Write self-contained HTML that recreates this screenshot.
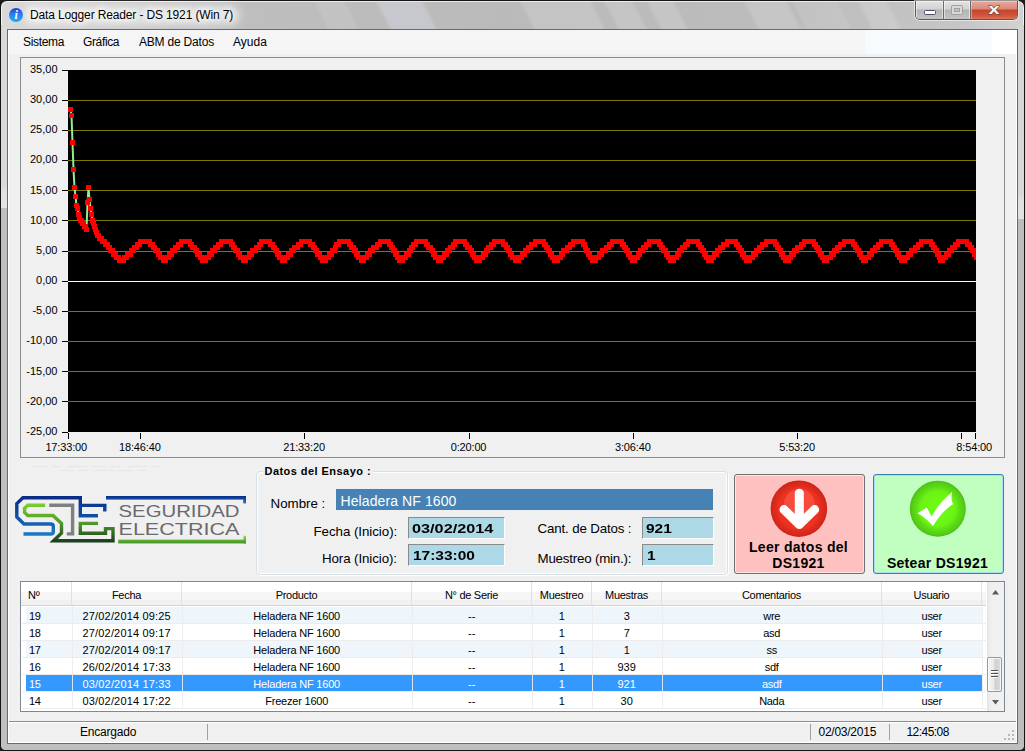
<!DOCTYPE html>
<html><head><meta charset="utf-8"><title>Data Logger Reader - DS 1921 (Win 7)</title>
<style>
html,body{margin:0;padding:0;}
body{width:1025px;height:751px;overflow:hidden;position:relative;background:#1c1c1c;font-family:"Liberation Sans",sans-serif;font-size:11px;color:#000;}
.abs{position:absolute;}
#frame{position:absolute;left:0;top:0;width:1023px;height:749px;border:1px solid #141414;border-radius:7px 7px 6px 6px;overflow:hidden;background:linear-gradient(90deg,#dadada 0px,#d0d0d0 60px,#bebebe 250px,#bababa 500px,#bcbcbc 800px,#c6c6c6 960px,#d2d2d2 1023px);box-shadow:inset 0 0 0 1px rgba(255,255,255,.7);}
#frame b{position:absolute;display:block}
#frame i{position:absolute;top:-5px;height:45px;transform:skewX(27deg);background:rgba(255,255,255,.15);filter:blur(1.5px);}
#client{position:absolute;left:8px;top:30px;width:1009px;height:713px;background:#f0f0f0;}
#cborder{position:absolute;left:7px;top:29px;width:1009px;height:713px;border:1px solid #6a6a6a;box-shadow:inset 1px 0 0 #fff,inset -1px 0 0 #fff,inset 0 -1px 0 #fff;}
#title{position:absolute;left:30px;top:7px;letter-spacing:-0.14px;font-size:12px;line-height:16px;white-space:nowrap;text-shadow:0 0 6px #fff,0 0 6px #fff,0 0 10px #fff,0 0 12px #fff;}
#menu{position:absolute;left:8px;top:30px;width:1009px;height:24px;background:linear-gradient(90deg,#f5f5f5 0,#f5f5f5 857px,#f6fbfd 857px,#f6fbfd 984px,#ffffff 984px);}
#menu span{position:absolute;top:5px;font-size:12px;line-height:14px;white-space:nowrap;}
.panel{position:absolute;border:1px solid #8c8c8c;box-sizing:border-box;}
.lbl{position:absolute;font-size:13.33px;line-height:16px;white-space:nowrap;}
.fld{position:absolute;box-sizing:border-box;background:#add8e6;border:1px solid;border-color:#8a8a8a #ffffff #ffffff #8a8a8a;font-weight:bold;font-size:13.33px;line-height:22.600px;padding-left:2.500px;white-space:nowrap;}
.btn{position:absolute;box-sizing:border-box;border:1px solid #707070;border-radius:3px;font-weight:bold;font-size:14px;letter-spacing:0.3px;line-height:15.500px;text-align:center;}
.hc{position:absolute;top:582px;height:24px;line-height:26.500px;text-align:center;box-sizing:border-box;font-size:11px;letter-spacing:-0.3px;}
.row{position:absolute;left:26px;width:956px;height:16px;line-height:16px;font-size:11px;letter-spacing:-0.3px;}
.row.alt{background:#eef5fb;}
.row.sel{background:#3399ff;color:#fff;}
.row span{position:absolute;top:0.500px;height:16px;text-align:center;box-sizing:border-box;white-space:nowrap;}
.hsep{position:absolute;top:582px;width:1px;height:23px;background:#e0e1e8;}
.csep{position:absolute;top:606px;width:1px;height:103px;background:rgba(236,236,236,.9);}
.rsep{position:absolute;left:22px;width:964px;height:1px;background:#ececec;}
#status span{position:absolute;top:3px;font-size:12px;line-height:14px;white-space:nowrap;}
</style></head><body>
<div id="frame"><b style="left:0;top:24px;width:7px;height:730px;background:linear-gradient(#d9d9d9 0,#dadada 160px,#e2e2e2 166px,#e4e4e4 183px,#bfbfbf 183px,#bfbfbf 100%)"></b><b style="left:1016px;top:24px;width:7px;height:730px;background:linear-gradient(#d4d4d4 0,#d8d8d8 170px,#e0e0e0 176px,#e2e2e2 194px,#bdbdbd 194px,#bdbdbd 100%)"></b><b style="left:0;top:743px;width:1023px;height:7px;background:#bfbfbf"></b><i style="left:322px;width:30px;opacity:.6"></i><i style="left:384px;width:46px;background:rgba(225,228,245,.3)"></i><i style="left:528px;width:70px"></i><i style="left:612px;width:28px"></i><i style="left:655px;width:26px"></i><i style="left:752px;width:42px"></i><i style="left:800px;width:45px;opacity:.6"></i><i style="left:866px;width:28px"></i></div>
<div class="abs" style="left:24px;top:5px;width:216px;height:20px;border-radius:10px;background:rgba(255,255,255,.5);filter:blur(5px)"></div>
<div id="title">Data Logger Reader - DS 1921 (Win 7)</div>
<svg class="abs" style="left:8px;top:7px" width="16" height="16" viewBox="0 0 16 16">
<defs><linearGradient id="ig" x1="0" y1="0" x2="0" y2="1"><stop offset="0" stop-color="#2a38c4"/><stop offset="0.3" stop-color="#2c6ae6"/><stop offset="0.6" stop-color="#2690f2"/><stop offset="1" stop-color="#1ea8f2"/></linearGradient></defs>
<circle cx="8" cy="8" r="7" fill="url(#ig)"/>
<text x="8.2" y="12.3" text-anchor="middle" font-family="Liberation Serif, serif" font-style="italic" font-weight="bold" font-size="12" fill="#fff">i</text>
</svg>
<div class="abs" style="left:915px;top:1px;width:103px;height:19px;box-sizing:border-box;border:1px solid #5a5a5a;border-top:none;border-radius:0 0 5px 5px;overflow:hidden;box-shadow:0 0 0 1px rgba(255,255,255,.55);">
 <div class="abs" style="left:0;top:0;width:27px;height:19px;background:linear-gradient(#e4e4e4 0,#d2d2d2 8px,#b4b4b4 9px,#c6c6c6 19px);border-right:1px solid #6a6a6a;box-shadow:inset 0 0 0 1px rgba(255,255,255,.5)"></div>
 <div class="abs" style="left:28px;top:0;width:26px;height:19px;background:linear-gradient(#e4e4e4 0,#d2d2d2 8px,#b4b4b4 9px,#c6c6c6 19px);border-right:1px solid #6a6a6a;box-shadow:inset 0 0 0 1px rgba(255,255,255,.5)"></div>
 <div class="abs" style="left:55px;top:0;width:47px;height:19px;background:linear-gradient(#e9a99c 0,#d9897a 8px,#c4442c 9px,#d2583c 15px,#dc7a5e 19px);box-shadow:inset 0 0 0 1px rgba(255,255,255,.35)"></div>
</div>
<svg class="abs" style="left:915px;top:0" width="103" height="20" viewBox="0 0 103 20">
 <rect x="9.5" y="10.5" width="11" height="4" rx="1" fill="#fff" stroke="#4a4e66" stroke-width="1"/>
 <rect x="36.500" y="5.500" width="11" height="9" rx="1" fill="#d8d8d8" stroke="#a0a0a0" stroke-width="1"/>
 <rect x="39.500" y="8.500" width="5" height="3" fill="#c0c0c0" stroke="#a0a0a0" stroke-width="1"/>
 <text x="79" y="13.800" text-anchor="middle" font-family="Liberation Sans, sans-serif" font-weight="bold" font-size="15" fill="#fff" stroke="#4a3c46" stroke-width="0.9" paint-order="stroke" textLength="11" lengthAdjust="spacingAndGlyphs">x</text>
</svg>
<div id="client"></div>
<div id="menu"><span style="left:15px;letter-spacing:-0.34px">Sistema</span><span style="left:75px;letter-spacing:-0.36px">Gráfica</span><span style="left:131px;letter-spacing:-0.2px">ABM de Datos</span><span style="left:225px">Ayuda</span></div>
<div class="panel" style="left:20px;top:57px;width:985px;height:401px;"></div>
<svg class="abs" style="left:0;top:0" width="1025" height="751" viewBox="0 0 1025 751" font-family="Liberation Sans, sans-serif" font-size="11" fill="#000">
<rect x="68" y="70" width="908" height="362" fill="#000"/>
<rect x="68" y="100" width="908" height="1" fill="#7e7800"/><rect x="68" y="130" width="908" height="1" fill="#7e7800"/><rect x="68" y="160" width="908" height="1" fill="#7e7800"/><rect x="68" y="190" width="908" height="1" fill="#7e7800"/><rect x="68" y="220" width="908" height="1" fill="#7e7800"/><rect x="68" y="251" width="908" height="1" fill="#7e7800"/><rect x="68" y="311" width="908" height="1" fill="#7e7800"/><rect x="68" y="341" width="908" height="1" fill="#7e7800"/><rect x="68" y="371" width="908" height="1" fill="#7e7800"/><rect x="68" y="401" width="908" height="1" fill="#7e7800"/><rect x="68" y="281" width="908" height="1" fill="#ffffff"/>
<clipPath id="pc"><rect x="68" y="70" width="908" height="362"/></clipPath>
<g clip-path="url(#pc)"><polyline points="70.5,109.5 71.5,115.5 72.5,142.5 73.5,169.5 74.5,187.5 75.5,196.5 76.5,205.5 77.5,208.5 78.5,214.5 79.5,217.5 80.5,220.5 81.5,220.5 82.5,223.5 83.5,223.5 84.5,226.5 85.5,226.5 86.5,229.5 87.5,202.5 88.5,187.5 89.5,199.5 90.5,208.5 91.5,214.5 92.5,220.5 93.5,223.5 94.5,226.5 95.5,229.5 96.5,232.5 97.5,235.5 98.5,235.5 99.5,238.5 100.5,238.5 101.5,238.5 102.5,241.5 103.5,241.5 104.5,241.5 105.5,244.5 106.5,244.5 107.5,244.5 108.5,247.5 108.5,247.5 109.5,247.5 110.5,250.5 111.5,250.5 112.5,250.5 113.5,254.5 114.5,254.5 115.5,254.5 116.5,257.5 117.5,257.5 118.5,257.5 119.5,260.5 120.5,260.5 121.5,260.5 122.5,260.5 123.5,260.5 124.5,257.5 125.5,257.5 126.5,257.5 127.5,254.5 128.5,254.5 129.5,254.5 130.5,254.5 131.5,250.5 132.5,250.5 133.5,250.5 134.5,247.5 135.5,247.5 136.5,247.5 137.5,244.5 138.5,244.5 139.5,244.5 140.5,241.5 141.5,241.5 142.5,241.5 143.5,241.5 144.5,241.5 145.5,241.5 146.5,241.5 147.5,241.5 148.5,241.5 149.5,241.5 150.5,244.5 151.5,244.5 152.5,244.5 153.5,247.5 154.5,247.5 155.5,250.5 156.5,250.5 157.5,250.5 158.5,254.5 159.5,254.5 160.5,257.5 161.5,257.5 162.5,257.5 163.5,260.5 164.5,260.5 165.5,260.5 166.5,257.5 167.5,257.5 168.5,257.5 169.5,254.5 170.5,254.5 171.5,254.5 172.5,250.5 173.5,250.5 174.5,250.5 175.5,247.5 176.5,247.5 177.5,247.5 178.5,244.5 179.5,244.5 180.5,244.5 181.5,241.5 182.5,241.5 183.5,241.5 184.5,241.5 184.5,241.5 185.5,241.5 186.5,241.5 187.5,241.5 188.5,241.5 189.5,241.5 190.5,244.5 191.5,244.5 192.5,247.5 193.5,247.5 194.5,247.5 195.5,250.5 196.5,250.5 197.5,254.5 198.5,254.5 199.5,254.5 200.5,257.5 201.5,257.5 202.5,260.5 203.5,260.5 204.5,260.5 205.5,260.5 206.5,257.5 207.5,257.5 208.5,257.5 209.5,254.5 210.5,254.5 211.5,254.5 212.5,250.5 213.5,250.5 214.5,250.5 215.5,247.5 216.5,247.5 217.5,247.5 218.5,244.5 219.5,244.5 220.5,244.5 221.5,241.5 222.5,241.5 223.5,241.5 224.5,241.5 225.5,241.5 226.5,241.5 227.5,241.5 228.5,241.5 229.5,241.5 230.5,241.5 231.5,244.5 232.5,244.5 233.5,247.5 234.5,247.5 235.5,250.5 236.5,250.5 237.5,250.5 238.5,254.5 239.5,254.5 240.5,257.5 241.5,257.5 242.5,257.5 243.5,260.5 244.5,260.5 245.5,260.5 246.5,257.5 247.5,257.5 248.5,257.5 249.5,254.5 250.5,254.5 251.5,254.5 252.5,250.5 253.5,250.5 254.5,250.5 255.5,250.5 256.5,247.5 257.5,247.5 258.5,247.5 259.5,244.5 259.5,244.5 260.5,244.5 261.5,241.5 262.5,241.5 263.5,241.5 264.5,241.5 265.5,241.5 266.5,241.5 267.5,241.5 268.5,241.5 269.5,241.5 270.5,244.5 271.5,244.5 272.5,244.5 273.5,247.5 274.5,247.5 275.5,250.5 276.5,250.5 277.5,254.5 278.5,254.5 279.5,257.5 280.5,257.5 281.5,257.5 282.5,260.5 283.5,260.5 284.5,260.5 285.5,257.5 286.5,257.5 287.5,257.5 288.5,254.5 289.5,254.5 290.5,254.5 291.5,250.5 292.5,250.5 293.5,250.5 294.5,247.5 295.5,247.5 296.5,247.5 297.5,247.5 298.5,244.5 299.5,244.5 300.5,244.5 301.5,241.5 302.5,241.5 303.5,241.5 304.5,241.5 305.5,241.5 306.5,241.5 307.5,241.5 308.5,241.5 309.5,241.5 310.5,244.5 311.5,244.5 312.5,244.5 313.5,247.5 314.5,247.5 315.5,250.5 316.5,250.5 317.5,254.5 318.5,254.5 319.5,254.5 320.5,257.5 321.5,257.5 322.5,260.5 323.5,260.5 324.5,260.5 325.5,260.5 326.5,257.5 327.5,257.5 328.5,257.5 329.5,254.5 330.5,254.5 331.5,254.5 332.5,250.5 333.5,250.5 334.5,250.5 335.5,247.5 335.5,247.5 336.5,244.5 337.5,244.5 338.5,244.5 339.5,241.5 340.5,241.5 341.5,241.5 342.5,241.5 343.5,241.5 344.5,241.5 345.5,241.5 346.5,241.5 347.5,241.5 348.5,241.5 349.5,244.5 350.5,244.5 351.5,247.5 352.5,247.5 353.5,247.5 354.5,250.5 355.5,250.5 356.5,254.5 357.5,254.5 358.5,257.5 359.5,257.5 360.5,257.5 361.5,260.5 362.5,260.5 363.5,260.5 364.5,257.5 365.5,257.5 366.5,257.5 367.5,254.5 368.5,254.5 369.5,254.5 370.5,250.5 371.5,250.5 372.5,250.5 373.5,247.5 374.5,247.5 375.5,247.5 376.5,247.5 377.5,244.5 378.5,244.5 379.5,244.5 380.5,241.5 381.5,241.5 382.5,241.5 383.5,241.5 384.5,241.5 385.5,241.5 386.5,241.5 387.5,241.5 388.5,241.5 389.5,244.5 390.5,244.5 391.5,247.5 392.5,247.5 393.5,250.5 394.5,250.5 395.5,254.5 396.5,254.5 397.5,257.5 398.5,257.5 399.5,260.5 400.5,260.5 401.5,260.5 402.5,260.5 403.5,257.5 404.5,257.5 405.5,257.5 406.5,254.5 407.5,254.5 408.5,254.5 409.5,250.5 410.5,250.5 410.5,250.5 411.5,247.5 412.5,247.5 413.5,244.5 414.5,244.5 415.5,244.5 416.5,241.5 417.5,241.5 418.5,241.5 419.5,241.5 420.5,241.5 421.5,241.5 422.5,241.5 423.5,241.5 424.5,241.5 425.5,241.5 426.5,244.5 427.5,244.5 428.5,247.5 429.5,247.5 430.5,247.5 431.5,250.5 432.5,250.5 433.5,254.5 434.5,254.5 435.5,257.5 436.5,257.5 437.5,257.5 438.5,260.5 439.5,260.5 440.5,260.5 441.5,257.5 442.5,257.5 443.5,257.5 444.5,254.5 445.5,254.5 446.5,254.5 447.5,250.5 448.5,250.5 449.5,250.5 450.5,247.5 451.5,247.5 452.5,247.5 453.5,244.5 454.5,244.5 455.5,241.5 456.5,241.5 457.5,241.5 458.5,241.5 459.5,241.5 460.5,241.5 461.5,241.5 462.5,241.5 463.5,241.5 464.5,241.5 465.5,244.5 466.5,244.5 467.5,247.5 468.5,247.5 469.5,247.5 470.5,250.5 471.5,250.5 472.5,254.5 473.5,254.5 474.5,257.5 475.5,257.5 476.5,260.5 477.5,260.5 478.5,260.5 479.5,260.5 480.5,257.5 481.5,257.5 482.5,257.5 483.5,254.5 484.5,254.5 485.5,254.5 486.5,250.5 486.5,250.5 487.5,250.5 488.5,247.5 489.5,247.5 490.5,247.5 491.5,244.5 492.5,244.5 493.5,244.5 494.5,241.5 495.5,241.5 496.5,241.5 497.5,241.5 498.5,241.5 499.5,241.5 500.5,241.5 501.5,241.5 502.5,241.5 503.5,244.5 504.5,244.5 505.5,244.5 506.5,247.5 507.5,247.5 508.5,250.5 509.5,250.5 510.5,254.5 511.5,254.5 512.5,257.5 513.5,257.5 514.5,257.5 515.5,260.5 516.5,260.5 517.5,260.5 518.5,260.5 519.5,257.5 520.5,257.5 521.5,257.5 522.5,254.5 523.5,254.5 524.5,254.5 525.5,250.5 526.5,250.5 527.5,250.5 528.5,247.5 529.5,247.5 530.5,247.5 531.5,244.5 532.5,244.5 533.5,244.5 534.5,244.5 535.5,241.5 536.5,241.5 537.5,241.5 538.5,241.5 539.5,241.5 540.5,241.5 541.5,241.5 542.5,241.5 543.5,241.5 544.5,244.5 545.5,244.5 546.5,247.5 547.5,247.5 548.5,250.5 549.5,250.5 550.5,254.5 551.5,254.5 552.5,257.5 553.5,257.5 554.5,260.5 555.5,260.5 556.5,260.5 557.5,260.5 558.5,257.5 559.5,257.5 560.5,257.5 561.5,254.5 562.5,254.5 562.5,254.5 563.5,250.5 564.5,250.5 565.5,250.5 566.5,250.5 567.5,247.5 568.5,247.5 569.5,247.5 570.5,244.5 571.5,244.5 572.5,244.5 573.5,241.5 574.5,241.5 575.5,241.5 576.5,241.5 577.5,241.5 578.5,241.5 579.5,241.5 580.5,241.5 581.5,241.5 582.5,241.5 583.5,244.5 584.5,244.5 585.5,247.5 586.5,250.5 587.5,250.5 588.5,254.5 589.5,254.5 590.5,257.5 591.5,257.5 592.5,260.5 593.5,260.5 594.5,260.5 595.5,260.5 596.5,257.5 597.5,257.5 598.5,257.5 599.5,254.5 600.5,254.5 601.5,254.5 602.5,250.5 603.5,250.5 604.5,250.5 605.5,250.5 606.5,247.5 607.5,247.5 608.5,247.5 609.5,244.5 610.5,244.5 611.5,244.5 612.5,241.5 613.5,241.5 614.5,241.5 615.5,241.5 616.5,241.5 617.5,241.5 618.5,241.5 619.5,241.5 620.5,241.5 621.5,241.5 622.5,244.5 623.5,244.5 624.5,247.5 625.5,247.5 626.5,250.5 627.5,250.5 628.5,254.5 629.5,254.5 630.5,257.5 631.5,257.5 632.5,260.5 633.5,260.5 634.5,260.5 635.5,257.5 636.5,257.5 637.5,257.5 638.5,254.5 638.5,254.5 639.5,254.5 640.5,250.5 641.5,250.5 642.5,250.5 643.5,247.5 644.5,247.5 645.5,247.5 646.5,244.5 647.5,244.5 648.5,244.5 649.5,241.5 650.5,241.5 651.5,241.5 652.5,241.5 653.5,241.5 654.5,241.5 655.5,241.5 656.5,241.5 657.5,241.5 658.5,241.5 659.5,244.5 660.5,244.5 661.5,247.5 662.5,247.5 663.5,250.5 664.5,250.5 665.5,250.5 666.5,254.5 667.5,254.5 668.5,257.5 669.5,257.5 670.5,260.5 671.5,260.5 672.5,260.5 673.5,260.5 674.5,257.5 675.5,257.5 676.5,257.5 677.5,254.5 678.5,254.5 679.5,250.5 680.5,250.5 681.5,250.5 682.5,247.5 683.5,247.5 684.5,247.5 685.5,244.5 686.5,244.5 687.5,244.5 688.5,241.5 689.5,241.5 690.5,241.5 691.5,241.5 692.5,241.5 693.5,241.5 694.5,241.5 695.5,241.5 696.5,241.5 697.5,241.5 698.5,244.5 699.5,244.5 700.5,247.5 701.5,247.5 702.5,250.5 703.5,250.5 704.5,254.5 705.5,254.5 706.5,257.5 707.5,257.5 708.5,260.5 709.5,260.5 710.5,260.5 711.5,260.5 712.5,257.5 713.5,257.5 713.5,257.5 714.5,254.5 715.5,254.5 716.5,254.5 717.5,250.5 718.5,250.5 719.5,250.5 720.5,247.5 721.5,247.5 722.5,247.5 723.5,244.5 724.5,244.5 725.5,244.5 726.5,244.5 727.5,241.5 728.5,241.5 729.5,241.5 730.5,241.5 731.5,241.5 732.5,241.5 733.5,241.5 734.5,241.5 735.5,241.5 736.5,244.5 737.5,244.5 738.5,247.5 739.5,247.5 740.5,250.5 741.5,250.5 742.5,254.5 743.5,254.5 744.5,257.5 745.5,257.5 746.5,260.5 747.5,260.5 748.5,260.5 749.5,260.5 750.5,257.5 751.5,257.5 752.5,257.5 753.5,254.5 754.5,254.5 755.5,254.5 756.5,250.5 757.5,250.5 758.5,250.5 759.5,247.5 760.5,247.5 761.5,247.5 762.5,244.5 763.5,244.5 764.5,244.5 765.5,244.5 766.5,241.5 767.5,241.5 768.5,241.5 769.5,241.5 770.5,241.5 771.5,241.5 772.5,241.5 773.5,241.5 774.5,241.5 775.5,244.5 776.5,244.5 777.5,247.5 778.5,247.5 779.5,250.5 780.5,250.5 781.5,254.5 782.5,254.5 783.5,257.5 784.5,257.5 785.5,260.5 786.5,260.5 787.5,260.5 788.5,260.5 789.5,257.5 789.5,257.5 790.5,257.5 791.5,254.5 792.5,254.5 793.5,254.5 794.5,250.5 795.5,250.5 796.5,250.5 797.5,247.5 798.5,247.5 799.5,247.5 800.5,247.5 801.5,244.5 802.5,244.5 803.5,244.5 804.5,241.5 805.5,241.5 806.5,241.5 807.5,241.5 808.5,241.5 809.5,241.5 810.5,241.5 811.5,241.5 812.5,241.5 813.5,241.5 814.5,244.5 815.5,244.5 816.5,247.5 817.5,247.5 818.5,250.5 819.5,250.5 820.5,254.5 821.5,254.5 822.5,257.5 823.5,257.5 824.5,260.5 825.5,260.5 826.5,260.5 827.5,257.5 828.5,257.5 829.5,257.5 830.5,257.5 831.5,254.5 832.5,254.5 833.5,254.5 834.5,250.5 835.5,250.5 836.5,250.5 837.5,247.5 838.5,247.5 839.5,247.5 840.5,244.5 841.5,244.5 842.5,244.5 843.5,244.5 844.5,241.5 845.5,241.5 846.5,241.5 847.5,241.5 848.5,241.5 849.5,241.5 850.5,241.5 851.5,241.5 852.5,241.5 853.5,244.5 854.5,244.5 855.5,247.5 856.5,247.5 857.5,250.5 858.5,250.5 859.5,254.5 860.5,254.5 861.5,257.5 862.5,257.5 863.5,260.5 864.5,260.5 864.5,260.5 865.5,260.5 866.5,257.5 867.5,257.5 868.5,257.5 869.5,254.5 870.5,254.5 871.5,254.5 872.5,250.5 873.5,250.5 874.5,250.5 875.5,247.5 876.5,247.5 877.5,247.5 878.5,244.5 879.5,244.5 880.5,244.5 881.5,241.5 882.5,241.5 883.5,241.5 884.5,241.5 885.5,241.5 886.5,241.5 887.5,241.5 888.5,241.5 889.5,241.5 890.5,241.5 891.5,244.5 892.5,244.5 893.5,247.5 894.5,247.5 895.5,250.5 896.5,250.5 897.5,254.5 898.5,254.5 899.5,257.5 900.5,257.5 901.5,260.5 902.5,260.5 903.5,260.5 904.5,260.5 905.5,257.5 906.5,257.5 907.5,257.5 908.5,254.5 909.5,254.5 910.5,254.5 911.5,250.5 912.5,250.5 913.5,250.5 914.5,250.5 915.5,247.5 916.5,247.5 917.5,247.5 918.5,244.5 919.5,244.5 920.5,244.5 921.5,241.5 922.5,241.5 923.5,241.5 924.5,241.5 925.5,241.5 926.5,241.5 927.5,241.5 928.5,241.5 929.5,241.5 930.5,241.5 931.5,244.5 932.5,244.5 933.5,247.5 934.5,247.5 935.5,250.5 936.5,250.5 937.5,254.5 938.5,254.5 939.5,257.5 940.5,257.5 940.5,260.5 941.5,260.5 942.5,260.5 943.5,257.5 944.5,257.5 945.5,257.5 946.5,254.5 947.5,254.5 948.5,254.5 949.5,250.5 950.5,250.5 951.5,250.5 952.5,247.5 953.5,247.5 954.5,247.5 955.5,244.5 956.5,244.5 957.5,244.5 958.5,241.5 959.5,241.5 960.5,241.5 961.5,241.5 962.5,241.5 963.5,241.5 964.5,241.5 965.5,241.5 966.5,241.5 967.5,244.5 968.5,244.5 969.5,244.5 970.5,247.5 971.5,247.5 972.5,250.5 973.5,250.5 974.5,254.5 975.5,254.5 976.5,257.5 977.5,257.5 978.5,260.5" fill="none" stroke="#90ee90" stroke-width="2"/>
<path d="M68 107h5v5h-5zM69 113h5v5h-5zM70 140h5v5h-5zM71 167h5v5h-5zM72 185h5v5h-5zM73 194h5v5h-5zM74 203h5v5h-5zM75 206h5v5h-5zM76 212h5v5h-5zM77 215h5v5h-5zM78 218h5v5h-5zM79 218h5v5h-5zM80 221h5v5h-5zM81 221h5v5h-5zM82 224h5v5h-5zM83 224h5v5h-5zM84 227h5v5h-5zM85 200h5v5h-5zM86 185h5v5h-5zM87 197h5v5h-5zM88 206h5v5h-5zM89 212h5v5h-5zM90 218h5v5h-5zM91 221h5v5h-5zM92 224h5v5h-5zM93 227h5v5h-5zM94 230h5v5h-5zM95 233h5v5h-5zM96 233h5v5h-5zM97 236h5v5h-5zM98 236h5v5h-5zM99 236h5v5h-5zM100 239h5v5h-5zM101 239h5v5h-5zM102 239h5v5h-5zM103 242h5v5h-5zM104 242h5v5h-5zM105 242h5v5h-5zM106 245h5v5h-5zM106 245h5v5h-5zM107 245h5v5h-5zM108 248h5v5h-5zM109 248h5v5h-5zM110 248h5v5h-5zM111 252h5v5h-5zM112 252h5v5h-5zM113 252h5v5h-5zM114 255h5v5h-5zM115 255h5v5h-5zM116 255h5v5h-5zM117 258h5v5h-5zM118 258h5v5h-5zM119 258h5v5h-5zM120 258h5v5h-5zM121 258h5v5h-5zM122 255h5v5h-5zM123 255h5v5h-5zM124 255h5v5h-5zM125 252h5v5h-5zM126 252h5v5h-5zM127 252h5v5h-5zM128 252h5v5h-5zM129 248h5v5h-5zM130 248h5v5h-5zM131 248h5v5h-5zM132 245h5v5h-5zM133 245h5v5h-5zM134 245h5v5h-5zM135 242h5v5h-5zM136 242h5v5h-5zM137 242h5v5h-5zM138 239h5v5h-5zM139 239h5v5h-5zM140 239h5v5h-5zM141 239h5v5h-5zM142 239h5v5h-5zM143 239h5v5h-5zM144 239h5v5h-5zM145 239h5v5h-5zM146 239h5v5h-5zM147 239h5v5h-5zM148 242h5v5h-5zM149 242h5v5h-5zM150 242h5v5h-5zM151 245h5v5h-5zM152 245h5v5h-5zM153 248h5v5h-5zM154 248h5v5h-5zM155 248h5v5h-5zM156 252h5v5h-5zM157 252h5v5h-5zM158 255h5v5h-5zM159 255h5v5h-5zM160 255h5v5h-5zM161 258h5v5h-5zM162 258h5v5h-5zM163 258h5v5h-5zM164 255h5v5h-5zM165 255h5v5h-5zM166 255h5v5h-5zM167 252h5v5h-5zM168 252h5v5h-5zM169 252h5v5h-5zM170 248h5v5h-5zM171 248h5v5h-5zM172 248h5v5h-5zM173 245h5v5h-5zM174 245h5v5h-5zM175 245h5v5h-5zM176 242h5v5h-5zM177 242h5v5h-5zM178 242h5v5h-5zM179 239h5v5h-5zM180 239h5v5h-5zM181 239h5v5h-5zM182 239h5v5h-5zM182 239h5v5h-5zM183 239h5v5h-5zM184 239h5v5h-5zM185 239h5v5h-5zM186 239h5v5h-5zM187 239h5v5h-5zM188 242h5v5h-5zM189 242h5v5h-5zM190 245h5v5h-5zM191 245h5v5h-5zM192 245h5v5h-5zM193 248h5v5h-5zM194 248h5v5h-5zM195 252h5v5h-5zM196 252h5v5h-5zM197 252h5v5h-5zM198 255h5v5h-5zM199 255h5v5h-5zM200 258h5v5h-5zM201 258h5v5h-5zM202 258h5v5h-5zM203 258h5v5h-5zM204 255h5v5h-5zM205 255h5v5h-5zM206 255h5v5h-5zM207 252h5v5h-5zM208 252h5v5h-5zM209 252h5v5h-5zM210 248h5v5h-5zM211 248h5v5h-5zM212 248h5v5h-5zM213 245h5v5h-5zM214 245h5v5h-5zM215 245h5v5h-5zM216 242h5v5h-5zM217 242h5v5h-5zM218 242h5v5h-5zM219 239h5v5h-5zM220 239h5v5h-5zM221 239h5v5h-5zM222 239h5v5h-5zM223 239h5v5h-5zM224 239h5v5h-5zM225 239h5v5h-5zM226 239h5v5h-5zM227 239h5v5h-5zM228 239h5v5h-5zM229 242h5v5h-5zM230 242h5v5h-5zM231 245h5v5h-5zM232 245h5v5h-5zM233 248h5v5h-5zM234 248h5v5h-5zM235 248h5v5h-5zM236 252h5v5h-5zM237 252h5v5h-5zM238 255h5v5h-5zM239 255h5v5h-5zM240 255h5v5h-5zM241 258h5v5h-5zM242 258h5v5h-5zM243 258h5v5h-5zM244 255h5v5h-5zM245 255h5v5h-5zM246 255h5v5h-5zM247 252h5v5h-5zM248 252h5v5h-5zM249 252h5v5h-5zM250 248h5v5h-5zM251 248h5v5h-5zM252 248h5v5h-5zM253 248h5v5h-5zM254 245h5v5h-5zM255 245h5v5h-5zM256 245h5v5h-5zM257 242h5v5h-5zM257 242h5v5h-5zM258 242h5v5h-5zM259 239h5v5h-5zM260 239h5v5h-5zM261 239h5v5h-5zM262 239h5v5h-5zM263 239h5v5h-5zM264 239h5v5h-5zM265 239h5v5h-5zM266 239h5v5h-5zM267 239h5v5h-5zM268 242h5v5h-5zM269 242h5v5h-5zM270 242h5v5h-5zM271 245h5v5h-5zM272 245h5v5h-5zM273 248h5v5h-5zM274 248h5v5h-5zM275 252h5v5h-5zM276 252h5v5h-5zM277 255h5v5h-5zM278 255h5v5h-5zM279 255h5v5h-5zM280 258h5v5h-5zM281 258h5v5h-5zM282 258h5v5h-5zM283 255h5v5h-5zM284 255h5v5h-5zM285 255h5v5h-5zM286 252h5v5h-5zM287 252h5v5h-5zM288 252h5v5h-5zM289 248h5v5h-5zM290 248h5v5h-5zM291 248h5v5h-5zM292 245h5v5h-5zM293 245h5v5h-5zM294 245h5v5h-5zM295 245h5v5h-5zM296 242h5v5h-5zM297 242h5v5h-5zM298 242h5v5h-5zM299 239h5v5h-5zM300 239h5v5h-5zM301 239h5v5h-5zM302 239h5v5h-5zM303 239h5v5h-5zM304 239h5v5h-5zM305 239h5v5h-5zM306 239h5v5h-5zM307 239h5v5h-5zM308 242h5v5h-5zM309 242h5v5h-5zM310 242h5v5h-5zM311 245h5v5h-5zM312 245h5v5h-5zM313 248h5v5h-5zM314 248h5v5h-5zM315 252h5v5h-5zM316 252h5v5h-5zM317 252h5v5h-5zM318 255h5v5h-5zM319 255h5v5h-5zM320 258h5v5h-5zM321 258h5v5h-5zM322 258h5v5h-5zM323 258h5v5h-5zM324 255h5v5h-5zM325 255h5v5h-5zM326 255h5v5h-5zM327 252h5v5h-5zM328 252h5v5h-5zM329 252h5v5h-5zM330 248h5v5h-5zM331 248h5v5h-5zM332 248h5v5h-5zM333 245h5v5h-5zM333 245h5v5h-5zM334 242h5v5h-5zM335 242h5v5h-5zM336 242h5v5h-5zM337 239h5v5h-5zM338 239h5v5h-5zM339 239h5v5h-5zM340 239h5v5h-5zM341 239h5v5h-5zM342 239h5v5h-5zM343 239h5v5h-5zM344 239h5v5h-5zM345 239h5v5h-5zM346 239h5v5h-5zM347 242h5v5h-5zM348 242h5v5h-5zM349 245h5v5h-5zM350 245h5v5h-5zM351 245h5v5h-5zM352 248h5v5h-5zM353 248h5v5h-5zM354 252h5v5h-5zM355 252h5v5h-5zM356 255h5v5h-5zM357 255h5v5h-5zM358 255h5v5h-5zM359 258h5v5h-5zM360 258h5v5h-5zM361 258h5v5h-5zM362 255h5v5h-5zM363 255h5v5h-5zM364 255h5v5h-5zM365 252h5v5h-5zM366 252h5v5h-5zM367 252h5v5h-5zM368 248h5v5h-5zM369 248h5v5h-5zM370 248h5v5h-5zM371 245h5v5h-5zM372 245h5v5h-5zM373 245h5v5h-5zM374 245h5v5h-5zM375 242h5v5h-5zM376 242h5v5h-5zM377 242h5v5h-5zM378 239h5v5h-5zM379 239h5v5h-5zM380 239h5v5h-5zM381 239h5v5h-5zM382 239h5v5h-5zM383 239h5v5h-5zM384 239h5v5h-5zM385 239h5v5h-5zM386 239h5v5h-5zM387 242h5v5h-5zM388 242h5v5h-5zM389 245h5v5h-5zM390 245h5v5h-5zM391 248h5v5h-5zM392 248h5v5h-5zM393 252h5v5h-5zM394 252h5v5h-5zM395 255h5v5h-5zM396 255h5v5h-5zM397 258h5v5h-5zM398 258h5v5h-5zM399 258h5v5h-5zM400 258h5v5h-5zM401 255h5v5h-5zM402 255h5v5h-5zM403 255h5v5h-5zM404 252h5v5h-5zM405 252h5v5h-5zM406 252h5v5h-5zM407 248h5v5h-5zM408 248h5v5h-5zM408 248h5v5h-5zM409 245h5v5h-5zM410 245h5v5h-5zM411 242h5v5h-5zM412 242h5v5h-5zM413 242h5v5h-5zM414 239h5v5h-5zM415 239h5v5h-5zM416 239h5v5h-5zM417 239h5v5h-5zM418 239h5v5h-5zM419 239h5v5h-5zM420 239h5v5h-5zM421 239h5v5h-5zM422 239h5v5h-5zM423 239h5v5h-5zM424 242h5v5h-5zM425 242h5v5h-5zM426 245h5v5h-5zM427 245h5v5h-5zM428 245h5v5h-5zM429 248h5v5h-5zM430 248h5v5h-5zM431 252h5v5h-5zM432 252h5v5h-5zM433 255h5v5h-5zM434 255h5v5h-5zM435 255h5v5h-5zM436 258h5v5h-5zM437 258h5v5h-5zM438 258h5v5h-5zM439 255h5v5h-5zM440 255h5v5h-5zM441 255h5v5h-5zM442 252h5v5h-5zM443 252h5v5h-5zM444 252h5v5h-5zM445 248h5v5h-5zM446 248h5v5h-5zM447 248h5v5h-5zM448 245h5v5h-5zM449 245h5v5h-5zM450 245h5v5h-5zM451 242h5v5h-5zM452 242h5v5h-5zM453 239h5v5h-5zM454 239h5v5h-5zM455 239h5v5h-5zM456 239h5v5h-5zM457 239h5v5h-5zM458 239h5v5h-5zM459 239h5v5h-5zM460 239h5v5h-5zM461 239h5v5h-5zM462 239h5v5h-5zM463 242h5v5h-5zM464 242h5v5h-5zM465 245h5v5h-5zM466 245h5v5h-5zM467 245h5v5h-5zM468 248h5v5h-5zM469 248h5v5h-5zM470 252h5v5h-5zM471 252h5v5h-5zM472 255h5v5h-5zM473 255h5v5h-5zM474 258h5v5h-5zM475 258h5v5h-5zM476 258h5v5h-5zM477 258h5v5h-5zM478 255h5v5h-5zM479 255h5v5h-5zM480 255h5v5h-5zM481 252h5v5h-5zM482 252h5v5h-5zM483 252h5v5h-5zM484 248h5v5h-5zM484 248h5v5h-5zM485 248h5v5h-5zM486 245h5v5h-5zM487 245h5v5h-5zM488 245h5v5h-5zM489 242h5v5h-5zM490 242h5v5h-5zM491 242h5v5h-5zM492 239h5v5h-5zM493 239h5v5h-5zM494 239h5v5h-5zM495 239h5v5h-5zM496 239h5v5h-5zM497 239h5v5h-5zM498 239h5v5h-5zM499 239h5v5h-5zM500 239h5v5h-5zM501 242h5v5h-5zM502 242h5v5h-5zM503 242h5v5h-5zM504 245h5v5h-5zM505 245h5v5h-5zM506 248h5v5h-5zM507 248h5v5h-5zM508 252h5v5h-5zM509 252h5v5h-5zM510 255h5v5h-5zM511 255h5v5h-5zM512 255h5v5h-5zM513 258h5v5h-5zM514 258h5v5h-5zM515 258h5v5h-5zM516 258h5v5h-5zM517 255h5v5h-5zM518 255h5v5h-5zM519 255h5v5h-5zM520 252h5v5h-5zM521 252h5v5h-5zM522 252h5v5h-5zM523 248h5v5h-5zM524 248h5v5h-5zM525 248h5v5h-5zM526 245h5v5h-5zM527 245h5v5h-5zM528 245h5v5h-5zM529 242h5v5h-5zM530 242h5v5h-5zM531 242h5v5h-5zM532 242h5v5h-5zM533 239h5v5h-5zM534 239h5v5h-5zM535 239h5v5h-5zM536 239h5v5h-5zM537 239h5v5h-5zM538 239h5v5h-5zM539 239h5v5h-5zM540 239h5v5h-5zM541 239h5v5h-5zM542 242h5v5h-5zM543 242h5v5h-5zM544 245h5v5h-5zM545 245h5v5h-5zM546 248h5v5h-5zM547 248h5v5h-5zM548 252h5v5h-5zM549 252h5v5h-5zM550 255h5v5h-5zM551 255h5v5h-5zM552 258h5v5h-5zM553 258h5v5h-5zM554 258h5v5h-5zM555 258h5v5h-5zM556 255h5v5h-5zM557 255h5v5h-5zM558 255h5v5h-5zM559 252h5v5h-5zM560 252h5v5h-5zM560 252h5v5h-5zM561 248h5v5h-5zM562 248h5v5h-5zM563 248h5v5h-5zM564 248h5v5h-5zM565 245h5v5h-5zM566 245h5v5h-5zM567 245h5v5h-5zM568 242h5v5h-5zM569 242h5v5h-5zM570 242h5v5h-5zM571 239h5v5h-5zM572 239h5v5h-5zM573 239h5v5h-5zM574 239h5v5h-5zM575 239h5v5h-5zM576 239h5v5h-5zM577 239h5v5h-5zM578 239h5v5h-5zM579 239h5v5h-5zM580 239h5v5h-5zM581 242h5v5h-5zM582 242h5v5h-5zM583 245h5v5h-5zM584 248h5v5h-5zM585 248h5v5h-5zM586 252h5v5h-5zM587 252h5v5h-5zM588 255h5v5h-5zM589 255h5v5h-5zM590 258h5v5h-5zM591 258h5v5h-5zM592 258h5v5h-5zM593 258h5v5h-5zM594 255h5v5h-5zM595 255h5v5h-5zM596 255h5v5h-5zM597 252h5v5h-5zM598 252h5v5h-5zM599 252h5v5h-5zM600 248h5v5h-5zM601 248h5v5h-5zM602 248h5v5h-5zM603 248h5v5h-5zM604 245h5v5h-5zM605 245h5v5h-5zM606 245h5v5h-5zM607 242h5v5h-5zM608 242h5v5h-5zM609 242h5v5h-5zM610 239h5v5h-5zM611 239h5v5h-5zM612 239h5v5h-5zM613 239h5v5h-5zM614 239h5v5h-5zM615 239h5v5h-5zM616 239h5v5h-5zM617 239h5v5h-5zM618 239h5v5h-5zM619 239h5v5h-5zM620 242h5v5h-5zM621 242h5v5h-5zM622 245h5v5h-5zM623 245h5v5h-5zM624 248h5v5h-5zM625 248h5v5h-5zM626 252h5v5h-5zM627 252h5v5h-5zM628 255h5v5h-5zM629 255h5v5h-5zM630 258h5v5h-5zM631 258h5v5h-5zM632 258h5v5h-5zM633 255h5v5h-5zM634 255h5v5h-5zM635 255h5v5h-5zM636 252h5v5h-5zM636 252h5v5h-5zM637 252h5v5h-5zM638 248h5v5h-5zM639 248h5v5h-5zM640 248h5v5h-5zM641 245h5v5h-5zM642 245h5v5h-5zM643 245h5v5h-5zM644 242h5v5h-5zM645 242h5v5h-5zM646 242h5v5h-5zM647 239h5v5h-5zM648 239h5v5h-5zM649 239h5v5h-5zM650 239h5v5h-5zM651 239h5v5h-5zM652 239h5v5h-5zM653 239h5v5h-5zM654 239h5v5h-5zM655 239h5v5h-5zM656 239h5v5h-5zM657 242h5v5h-5zM658 242h5v5h-5zM659 245h5v5h-5zM660 245h5v5h-5zM661 248h5v5h-5zM662 248h5v5h-5zM663 248h5v5h-5zM664 252h5v5h-5zM665 252h5v5h-5zM666 255h5v5h-5zM667 255h5v5h-5zM668 258h5v5h-5zM669 258h5v5h-5zM670 258h5v5h-5zM671 258h5v5h-5zM672 255h5v5h-5zM673 255h5v5h-5zM674 255h5v5h-5zM675 252h5v5h-5zM676 252h5v5h-5zM677 248h5v5h-5zM678 248h5v5h-5zM679 248h5v5h-5zM680 245h5v5h-5zM681 245h5v5h-5zM682 245h5v5h-5zM683 242h5v5h-5zM684 242h5v5h-5zM685 242h5v5h-5zM686 239h5v5h-5zM687 239h5v5h-5zM688 239h5v5h-5zM689 239h5v5h-5zM690 239h5v5h-5zM691 239h5v5h-5zM692 239h5v5h-5zM693 239h5v5h-5zM694 239h5v5h-5zM695 239h5v5h-5zM696 242h5v5h-5zM697 242h5v5h-5zM698 245h5v5h-5zM699 245h5v5h-5zM700 248h5v5h-5zM701 248h5v5h-5zM702 252h5v5h-5zM703 252h5v5h-5zM704 255h5v5h-5zM705 255h5v5h-5zM706 258h5v5h-5zM707 258h5v5h-5zM708 258h5v5h-5zM709 258h5v5h-5zM710 255h5v5h-5zM711 255h5v5h-5zM711 255h5v5h-5zM712 252h5v5h-5zM713 252h5v5h-5zM714 252h5v5h-5zM715 248h5v5h-5zM716 248h5v5h-5zM717 248h5v5h-5zM718 245h5v5h-5zM719 245h5v5h-5zM720 245h5v5h-5zM721 242h5v5h-5zM722 242h5v5h-5zM723 242h5v5h-5zM724 242h5v5h-5zM725 239h5v5h-5zM726 239h5v5h-5zM727 239h5v5h-5zM728 239h5v5h-5zM729 239h5v5h-5zM730 239h5v5h-5zM731 239h5v5h-5zM732 239h5v5h-5zM733 239h5v5h-5zM734 242h5v5h-5zM735 242h5v5h-5zM736 245h5v5h-5zM737 245h5v5h-5zM738 248h5v5h-5zM739 248h5v5h-5zM740 252h5v5h-5zM741 252h5v5h-5zM742 255h5v5h-5zM743 255h5v5h-5zM744 258h5v5h-5zM745 258h5v5h-5zM746 258h5v5h-5zM747 258h5v5h-5zM748 255h5v5h-5zM749 255h5v5h-5zM750 255h5v5h-5zM751 252h5v5h-5zM752 252h5v5h-5zM753 252h5v5h-5zM754 248h5v5h-5zM755 248h5v5h-5zM756 248h5v5h-5zM757 245h5v5h-5zM758 245h5v5h-5zM759 245h5v5h-5zM760 242h5v5h-5zM761 242h5v5h-5zM762 242h5v5h-5zM763 242h5v5h-5zM764 239h5v5h-5zM765 239h5v5h-5zM766 239h5v5h-5zM767 239h5v5h-5zM768 239h5v5h-5zM769 239h5v5h-5zM770 239h5v5h-5zM771 239h5v5h-5zM772 239h5v5h-5zM773 242h5v5h-5zM774 242h5v5h-5zM775 245h5v5h-5zM776 245h5v5h-5zM777 248h5v5h-5zM778 248h5v5h-5zM779 252h5v5h-5zM780 252h5v5h-5zM781 255h5v5h-5zM782 255h5v5h-5zM783 258h5v5h-5zM784 258h5v5h-5zM785 258h5v5h-5zM786 258h5v5h-5zM787 255h5v5h-5zM787 255h5v5h-5zM788 255h5v5h-5zM789 252h5v5h-5zM790 252h5v5h-5zM791 252h5v5h-5zM792 248h5v5h-5zM793 248h5v5h-5zM794 248h5v5h-5zM795 245h5v5h-5zM796 245h5v5h-5zM797 245h5v5h-5zM798 245h5v5h-5zM799 242h5v5h-5zM800 242h5v5h-5zM801 242h5v5h-5zM802 239h5v5h-5zM803 239h5v5h-5zM804 239h5v5h-5zM805 239h5v5h-5zM806 239h5v5h-5zM807 239h5v5h-5zM808 239h5v5h-5zM809 239h5v5h-5zM810 239h5v5h-5zM811 239h5v5h-5zM812 242h5v5h-5zM813 242h5v5h-5zM814 245h5v5h-5zM815 245h5v5h-5zM816 248h5v5h-5zM817 248h5v5h-5zM818 252h5v5h-5zM819 252h5v5h-5zM820 255h5v5h-5zM821 255h5v5h-5zM822 258h5v5h-5zM823 258h5v5h-5zM824 258h5v5h-5zM825 255h5v5h-5zM826 255h5v5h-5zM827 255h5v5h-5zM828 255h5v5h-5zM829 252h5v5h-5zM830 252h5v5h-5zM831 252h5v5h-5zM832 248h5v5h-5zM833 248h5v5h-5zM834 248h5v5h-5zM835 245h5v5h-5zM836 245h5v5h-5zM837 245h5v5h-5zM838 242h5v5h-5zM839 242h5v5h-5zM840 242h5v5h-5zM841 242h5v5h-5zM842 239h5v5h-5zM843 239h5v5h-5zM844 239h5v5h-5zM845 239h5v5h-5zM846 239h5v5h-5zM847 239h5v5h-5zM848 239h5v5h-5zM849 239h5v5h-5zM850 239h5v5h-5zM851 242h5v5h-5zM852 242h5v5h-5zM853 245h5v5h-5zM854 245h5v5h-5zM855 248h5v5h-5zM856 248h5v5h-5zM857 252h5v5h-5zM858 252h5v5h-5zM859 255h5v5h-5zM860 255h5v5h-5zM861 258h5v5h-5zM862 258h5v5h-5zM862 258h5v5h-5zM863 258h5v5h-5zM864 255h5v5h-5zM865 255h5v5h-5zM866 255h5v5h-5zM867 252h5v5h-5zM868 252h5v5h-5zM869 252h5v5h-5zM870 248h5v5h-5zM871 248h5v5h-5zM872 248h5v5h-5zM873 245h5v5h-5zM874 245h5v5h-5zM875 245h5v5h-5zM876 242h5v5h-5zM877 242h5v5h-5zM878 242h5v5h-5zM879 239h5v5h-5zM880 239h5v5h-5zM881 239h5v5h-5zM882 239h5v5h-5zM883 239h5v5h-5zM884 239h5v5h-5zM885 239h5v5h-5zM886 239h5v5h-5zM887 239h5v5h-5zM888 239h5v5h-5zM889 242h5v5h-5zM890 242h5v5h-5zM891 245h5v5h-5zM892 245h5v5h-5zM893 248h5v5h-5zM894 248h5v5h-5zM895 252h5v5h-5zM896 252h5v5h-5zM897 255h5v5h-5zM898 255h5v5h-5zM899 258h5v5h-5zM900 258h5v5h-5zM901 258h5v5h-5zM902 258h5v5h-5zM903 255h5v5h-5zM904 255h5v5h-5zM905 255h5v5h-5zM906 252h5v5h-5zM907 252h5v5h-5zM908 252h5v5h-5zM909 248h5v5h-5zM910 248h5v5h-5zM911 248h5v5h-5zM912 248h5v5h-5zM913 245h5v5h-5zM914 245h5v5h-5zM915 245h5v5h-5zM916 242h5v5h-5zM917 242h5v5h-5zM918 242h5v5h-5zM919 239h5v5h-5zM920 239h5v5h-5zM921 239h5v5h-5zM922 239h5v5h-5zM923 239h5v5h-5zM924 239h5v5h-5zM925 239h5v5h-5zM926 239h5v5h-5zM927 239h5v5h-5zM928 239h5v5h-5zM929 242h5v5h-5zM930 242h5v5h-5zM931 245h5v5h-5zM932 245h5v5h-5zM933 248h5v5h-5zM934 248h5v5h-5zM935 252h5v5h-5zM936 252h5v5h-5zM937 255h5v5h-5zM938 255h5v5h-5zM938 258h5v5h-5zM939 258h5v5h-5zM940 258h5v5h-5zM941 255h5v5h-5zM942 255h5v5h-5zM943 255h5v5h-5zM944 252h5v5h-5zM945 252h5v5h-5zM946 252h5v5h-5zM947 248h5v5h-5zM948 248h5v5h-5zM949 248h5v5h-5zM950 245h5v5h-5zM951 245h5v5h-5zM952 245h5v5h-5zM953 242h5v5h-5zM954 242h5v5h-5zM955 242h5v5h-5zM956 239h5v5h-5zM957 239h5v5h-5zM958 239h5v5h-5zM959 239h5v5h-5zM960 239h5v5h-5zM961 239h5v5h-5zM962 239h5v5h-5zM963 239h5v5h-5zM964 239h5v5h-5zM965 242h5v5h-5zM966 242h5v5h-5zM967 242h5v5h-5zM968 245h5v5h-5zM969 245h5v5h-5zM970 248h5v5h-5zM971 248h5v5h-5zM972 252h5v5h-5zM973 252h5v5h-5zM974 255h5v5h-5zM975 255h5v5h-5zM976 258h5v5h-5z" fill="#ff0000" shape-rendering="crispEdges"/></g>
<text x="57.5" y="72.8" text-anchor="end">35,00</text><rect x="62" y="70" width="6" height="1" fill="#000"/><text x="57.5" y="103.0" text-anchor="end">30,00</text><rect x="62" y="100" width="6" height="1" fill="#000"/><text x="57.5" y="133.1" text-anchor="end">25,00</text><rect x="62" y="130" width="6" height="1" fill="#000"/><text x="57.5" y="163.3" text-anchor="end">20,00</text><rect x="62" y="160" width="6" height="1" fill="#000"/><text x="57.5" y="193.5" text-anchor="end">15,00</text><rect x="62" y="190" width="6" height="1" fill="#000"/><text x="57.5" y="223.6" text-anchor="end">10,00</text><rect x="62" y="220" width="6" height="1" fill="#000"/><text x="57.5" y="253.8" text-anchor="end">5,00</text><rect x="62" y="251" width="6" height="1" fill="#000"/><text x="57.5" y="284.0" text-anchor="end">0,00</text><rect x="62" y="281" width="6" height="1" fill="#000"/><text x="57.5" y="314.1" text-anchor="end">-5,00</text><rect x="62" y="311" width="6" height="1" fill="#000"/><text x="57.5" y="344.3" text-anchor="end">-10,00</text><rect x="62" y="341" width="6" height="1" fill="#000"/><text x="57.5" y="374.5" text-anchor="end">-15,00</text><rect x="62" y="371" width="6" height="1" fill="#000"/><text x="57.5" y="404.6" text-anchor="end">-20,00</text><rect x="62" y="401" width="6" height="1" fill="#000"/><text x="57.5" y="434.8" text-anchor="end">-25,00</text><rect x="62" y="432" width="6" height="1" fill="#000"/>
<rect x="961" y="433" width="1" height="6" fill="#000"/><rect x="68" y="433" width="1" height="6" fill="#000"/><text x="66.2" y="451" text-anchor="middle" letter-spacing="-0.15">17:33:00</text><rect x="140" y="433" width="1" height="6" fill="#000"/><text x="139.8" y="451" text-anchor="middle" letter-spacing="-0.15">18:46:40</text><rect x="304" y="433" width="1" height="6" fill="#000"/><text x="304.1" y="451" text-anchor="middle" letter-spacing="-0.15">21:33:20</text><rect x="469" y="433" width="1" height="6" fill="#000"/><text x="468.5" y="451" text-anchor="middle" letter-spacing="-0.15">0:20:00</text><rect x="633" y="433" width="1" height="6" fill="#000"/><text x="632.8" y="451" text-anchor="middle" letter-spacing="-0.15">3:06:40</text><rect x="797" y="433" width="1" height="6" fill="#000"/><text x="797.1" y="451" text-anchor="middle" letter-spacing="-0.15">5:53:20</text><rect x="975" y="433" width="1" height="6" fill="#000"/><text x="974.2" y="451" text-anchor="middle" letter-spacing="-0.15">8:54:00</text>
</svg>
<svg class="abs" style="left:0;top:0" width="260" height="751" viewBox="0 0 260 751">
<defs>
<linearGradient id="lb" x1="0" y1="496" x2="0" y2="536" gradientUnits="userSpaceOnUse"><stop offset="0" stop-color="#0b2a86"/><stop offset="0.45" stop-color="#0f4aa0"/><stop offset="1" stop-color="#1a7ccc"/></linearGradient>
<linearGradient id="lg" x1="0" y1="503" x2="0" y2="543" gradientUnits="userSpaceOnUse"><stop offset="0" stop-color="#7fd030"/><stop offset="0.5" stop-color="#4f9a2c"/><stop offset="1" stop-color="#17361c"/></linearGradient>
<linearGradient id="lb2" x1="0" y1="496" x2="0" y2="503" gradientUnits="userSpaceOnUse"><stop offset="0" stop-color="#0b2a86"/><stop offset="1" stop-color="#1a78c8"/></linearGradient>
<linearGradient id="lg2" x1="0" y1="536" x2="0" y2="544" gradientUnits="userSpaceOnUse"><stop offset="0" stop-color="#8fd840"/><stop offset="1" stop-color="#3c8a28"/></linearGradient>
</defs>
<g fill="none" stroke-width="3.4" stroke-linejoin="miter">
<path d="M82 497.700H22.900L16.800 503.600V517L24 524H50.500Q53.300 524 53.300 526.500V531.400Q53.300 534 50.500 534H23.500" stroke="url(#lb)"/>
<path d="M80.300 496V517.500M80.300 505.400H104.800V511.500M80.300 515.800H98" stroke="url(#lb)"/>
<path d="M45.100 505.300H27.800L24.600 508.300V512.600L27.800 515.500H53L61.500 523.600V533L53.600 540.800H113V528.600H105.500V533.300H80.300V523.400H98" stroke="url(#lg)"/>
<path d="M49.200 505.300H74.300M72.600 505.300V533.900H66.800" stroke="#808080"/>
</g>
<rect x="106" y="496" width="140" height="3.600" fill="url(#lb2)"/>
<rect x="243.200" y="496" width="2.800" height="7.400" fill="url(#lb2)"/>
<rect x="118.200" y="539.600" width="127.800" height="3.800" fill="url(#lg2)"/>
<rect x="243.500" y="535.800" width="2.500" height="7.600" fill="url(#lg2)"/>
<g font-family="Liberation Sans, sans-serif" font-size="17.200" fill="#6a6a6e">
<text x="118.500" y="517" textLength="121" lengthAdjust="spacingAndGlyphs">SEGURIDAD</text>
<text x="118.500" y="535" textLength="121" lengthAdjust="spacingAndGlyphs">ELECTRICA</text>
</g>
<g stroke="#e4e4e4" stroke-width="1" opacity="0.8"><path d="M33 466.500H160M60 470.500H150" stroke-dasharray="14 5 9 7 20 4"/></g>
</svg>
<div class="abs" style="left:256px;top:471px;width:470px;height:102px;border:1px solid #d5dfe5;border-radius:4px;box-shadow:inset 0 0 0 1px #fff, 1px 1px 0 #fff;"></div>
<div class="abs" style="left:262.500px;top:464px;padding:0 2px;background:#f0f0f0;font-weight:bold;font-size:11px;line-height:15px;letter-spacing:0.45px;white-space:nowrap;">Datos del Ensayo :</div>
<div class="lbl" style="left:270.500px;top:495.700px">Nombre :</div>
<div class="abs" style="left:336px;top:489px;width:377px;height:21px;background:#4682b4;color:#fff;font-size:14px;line-height:25px;padding-left:4.500px;box-sizing:border-box;white-space:nowrap;letter-spacing:0.1px">Heladera NF 1600</div>
<div class="lbl" style="left:313.500px;top:524px;letter-spacing:-0.05px">Fecha (Inicio):</div>
<div class="fld" style="left:408px;top:517px;width:97px;height:22px;"><span style="display:inline-block;transform-origin:0 50%;transform:scaleX(1.22);">03/02/2014</span></div>
<div class="lbl" style="left:322px;top:551px;letter-spacing:-0.1px">Hora (Inicio):</div>
<div class="fld" style="left:408px;top:544px;width:97px;height:22px;padding-left:4px"><span style="display:inline-block;transform-origin:0 50%;transform:scaleX(1.16);">17:33:00</span></div>
<div class="lbl" style="left:537.500px;top:521px;letter-spacing:-0.15px">Cant. de Datos :</div>
<div class="fld" style="left:642px;top:517px;width:72px;height:22px;"><span style="display:inline-block;transform-origin:0 50%;transform:scaleX(1.16);">921</span></div>
<div class="lbl" style="left:537.500px;top:551px;letter-spacing:-0.2px">Muestreo (min.):</div>
<div class="fld" style="left:642px;top:544px;width:72px;height:22px;padding-left:4px"><span style="display:inline-block;transform-origin:0 50%;transform:scaleX(1.16);">1</span></div>
<div class="btn" style="left:734px;top:474px;width:131px;height:100px;background:#ffc0c0;box-shadow:inset 0 0 0 1px rgba(255,255,255,.55);"><div style="position:absolute;left:-2px;right:0;top:65px">Leer datos del<br>DS1921</div></div>
<div class="btn" style="left:873px;top:474px;width:131px;height:100px;background:#c0ffc0;border-color:#3c7fb1;box-shadow:inset 0 0 0 1px #a6dff0;"><div style="position:absolute;left:-2px;right:0;top:80.500px">Setear DS1921</div></div>
<svg class="abs" style="left:734px;top:474px" width="270" height="100" viewBox="734 474 270 100">
<defs>
<radialGradient id="rg" cx="0.5" cy="0.5" r="0.5"><stop offset="0" stop-color="#ee3424"/><stop offset="0.72" stop-color="#ec3222"/><stop offset="0.8" stop-color="#e02c1e"/><stop offset="0.93" stop-color="#d4281a"/><stop offset="1" stop-color="#c82418"/></radialGradient>
<radialGradient id="gg" cx="0.5" cy="0.5" r="0.5"><stop offset="0" stop-color="#70fc16"/><stop offset="0.62" stop-color="#6af414"/><stop offset="0.78" stop-color="#5cdc14"/><stop offset="0.93" stop-color="#54cc16"/><stop offset="1" stop-color="#4cb816"/></radialGradient>
</defs>
<circle cx="798.900" cy="508.700" r="28.300" fill="url(#rg)"/>
<circle cx="799.300" cy="504.500" r="15.500" fill="#f74c3c"/>
<path d="M799.300 493.200V524.600M784 509.600L799.300 524.600L814.600 509.600" fill="none" stroke="#fff" stroke-width="9" stroke-linecap="round" stroke-linejoin="round"/>
<circle cx="937.800" cy="508.700" r="28" fill="url(#gg)"/>
<path d="M917.600 513.300L926.800 507.600L931.600 516.400Q938.700 503.200 952.300 491.800Q950.400 499 953 504.300Q942 511 933 526.100Q926 518 917.600 513.300Z" fill="#fff"/>
</svg>
<div class="panel" style="left:20px;top:581px;width:985px;height:131px;background:#fff;border-color:#7f8794"></div>
<div class="abs" style="left:21px;top:582px;width:965px;height:23px;background:linear-gradient(#ffffff 0,#ffffff 10px,#f6f6f7 10px,#f6f6f7 18px,#f1f1f2 18px,#f1f1f2 23px);border-bottom:1px solid #d5d5d5"></div>
<div class="hc" style="left:21px;width:50px;text-align:left;padding-left:7px">Nº</div><div class="hc" style="left:71.5px;width:110px">Fecha</div><div class="hc" style="left:181.5px;width:230px">Producto</div><div class="hc" style="left:411.5px;width:120px">N° de Serie</div><div class="hc" style="left:531.5px;width:60px">Muestreo</div><div class="hc" style="left:591.5px;width:70px">Muestras</div><div class="hc" style="left:661.5px;width:220px">Comentarios</div><div class="hc" style="left:881.5px;width:100px">Usuario</div><div class="row alt" style="top:607px"><span style="left:0px;width:46px;text-align:left;padding-left:3px">19</span><span style="left:45.7px;width:110px;letter-spacing:0.17px">27/02/2014 09:25</span><span style="left:155.7px;width:230px;letter-spacing:-0.2px">Heladera NF 1600</span><span style="left:385.7px;width:120px;letter-spacing:0px">--</span><span style="left:505.7px;width:60px;letter-spacing:0px">1</span><span style="left:565.7px;width:70px;letter-spacing:0px">3</span><span style="left:635.7px;width:220px;letter-spacing:-0.3px">wre</span><span style="left:855.7px;width:100px;letter-spacing:-0.3px">user</span></div><div class="row" style="top:624px"><span style="left:0px;width:46px;text-align:left;padding-left:3px">18</span><span style="left:45.7px;width:110px;letter-spacing:0.17px">27/02/2014 09:17</span><span style="left:155.7px;width:230px;letter-spacing:-0.2px">Heladera NF 1600</span><span style="left:385.7px;width:120px;letter-spacing:0px">--</span><span style="left:505.7px;width:60px;letter-spacing:0px">1</span><span style="left:565.7px;width:70px;letter-spacing:0px">7</span><span style="left:635.7px;width:220px;letter-spacing:-0.3px">asd</span><span style="left:855.7px;width:100px;letter-spacing:-0.3px">user</span></div><div class="row alt" style="top:641px"><span style="left:0px;width:46px;text-align:left;padding-left:3px">17</span><span style="left:45.7px;width:110px;letter-spacing:0.17px">27/02/2014 09:17</span><span style="left:155.7px;width:230px;letter-spacing:-0.2px">Heladera NF 1600</span><span style="left:385.7px;width:120px;letter-spacing:0px">--</span><span style="left:505.7px;width:60px;letter-spacing:0px">1</span><span style="left:565.7px;width:70px;letter-spacing:0px">1</span><span style="left:635.7px;width:220px;letter-spacing:-0.3px">ss</span><span style="left:855.7px;width:100px;letter-spacing:-0.3px">user</span></div><div class="row" style="top:658px"><span style="left:0px;width:46px;text-align:left;padding-left:3px">16</span><span style="left:45.7px;width:110px;letter-spacing:0.17px">26/02/2014 17:33</span><span style="left:155.7px;width:230px;letter-spacing:-0.2px">Heladera NF 1600</span><span style="left:385.7px;width:120px;letter-spacing:0px">--</span><span style="left:505.7px;width:60px;letter-spacing:0px">1</span><span style="left:565.7px;width:70px;letter-spacing:0px">939</span><span style="left:635.7px;width:220px;letter-spacing:-0.3px">sdf</span><span style="left:855.7px;width:100px;letter-spacing:-0.3px">user</span></div><div class="row sel" style="top:675px"><span style="left:0px;width:46px;text-align:left;padding-left:3px">15</span><span style="left:45.7px;width:110px;letter-spacing:0.17px">03/02/2014 17:33</span><span style="left:155.7px;width:230px;letter-spacing:-0.2px">Heladera NF 1600</span><span style="left:385.7px;width:120px;letter-spacing:0px">--</span><span style="left:505.7px;width:60px;letter-spacing:0px">1</span><span style="left:565.7px;width:70px;letter-spacing:0px">921</span><span style="left:635.7px;width:220px;letter-spacing:-0.3px">asdf</span><span style="left:855.7px;width:100px;letter-spacing:-0.3px">user</span></div><div class="row" style="top:692px"><span style="left:0px;width:46px;text-align:left;padding-left:3px">14</span><span style="left:45.7px;width:110px;letter-spacing:0.17px">03/02/2014 17:22</span><span style="left:155.7px;width:230px;letter-spacing:-0.2px">Freezer 1600</span><span style="left:385.7px;width:120px;letter-spacing:0px">--</span><span style="left:505.7px;width:60px;letter-spacing:0px">1</span><span style="left:565.7px;width:70px;letter-spacing:0px">30</span><span style="left:635.7px;width:220px;letter-spacing:-0.3px">Nada</span><span style="left:855.7px;width:100px;letter-spacing:-0.3px">user</span></div><div class="hsep" style="left:71px"></div><div class="csep" style="left:72px"></div><div class="hsep" style="left:181px"></div><div class="csep" style="left:182px"></div><div class="hsep" style="left:411px"></div><div class="csep" style="left:412px"></div><div class="hsep" style="left:531px"></div><div class="csep" style="left:532px"></div><div class="hsep" style="left:591px"></div><div class="csep" style="left:592px"></div><div class="hsep" style="left:661px"></div><div class="csep" style="left:662px"></div><div class="hsep" style="left:881px"></div><div class="csep" style="left:882px"></div><div class="hsep" style="left:981px"></div><div class="csep" style="left:982px"></div><div class="rsep" style="top:623px"></div><div class="rsep" style="top:640px"></div><div class="rsep" style="top:657px"></div><div class="rsep" style="top:674px"></div><div class="rsep" style="top:691px"></div><div class="rsep" style="top:708px"></div>
<div class="abs" style="left:987px;top:582px;width:17px;height:129px;background:linear-gradient(90deg,#e3e3e3 0,#ebebeb 2px,#f0f0f0 5px,#f1f1f1 17px);"></div>
<div class="abs" style="left:987px;top:657px;width:15px;height:35px;box-sizing:border-box;border:1px solid #979797;border-radius:2px;background:linear-gradient(90deg,#f6f6f6 0,#e8e8e8 6px,#cfcfcf 7px,#d6d6d6 10px,#dedede 15px);box-shadow:inset 0 0 0 1px rgba(255,255,255,.7)"></div>
<svg class="abs" style="left:987px;top:582px" width="17" height="128" viewBox="0 0 17 128">
<path d="M5 12.500L8.500 8L12 12.500Z" fill="#5a5a5a"/>
<path d="M5 118L8.500 122.500L12 118Z" fill="#5a5a5a"/>
<path d="M4 88.500H11M4 91.500H11M4 94.500H11" stroke="#505050" stroke-width="1"/>
<path d="M4 89.500H11M4 92.500H11M4 95.500H11" stroke="#fbfbfb" stroke-width="1"/>
</svg>
<div id="status" class="abs" style="left:8px;top:721px;width:1009px;height:22px;background:#f0f0f0;border-top:1px solid #8e8e8e;box-shadow:inset 0 1px 0 #fff;box-sizing:border-box;">
<span style="left:72px;letter-spacing:-0.2px">Encargado</span>
<span style="left:810.5px;letter-spacing:-0.25px">02/03/2015</span>
<span style="left:898.5px;letter-spacing:-0.55px">12:45:08</span>
<div class="abs" style="left:199px;top:2px;width:1px;height:16px;background:#a0a0a0"></div>
<div class="abs" style="left:802px;top:2px;width:1px;height:16px;background:#a0a0a0"></div>
<div class="abs" style="left:881px;top:2px;width:1px;height:16px;background:#a0a0a0"></div>
<svg class="abs" style="left:995px;top:7px" width="13" height="13" viewBox="0 0 13 13"><g fill="#b8b8b8"><rect x="9" y="1" width="2" height="2"/><rect x="5" y="5" width="2" height="2"/><rect x="9" y="5" width="2" height="2"/><rect x="1" y="9" width="2" height="2"/><rect x="5" y="9" width="2" height="2"/><rect x="9" y="9" width="2" height="2"/></g></svg>
</div>
<div id="cborder"></div>
</body></html>
